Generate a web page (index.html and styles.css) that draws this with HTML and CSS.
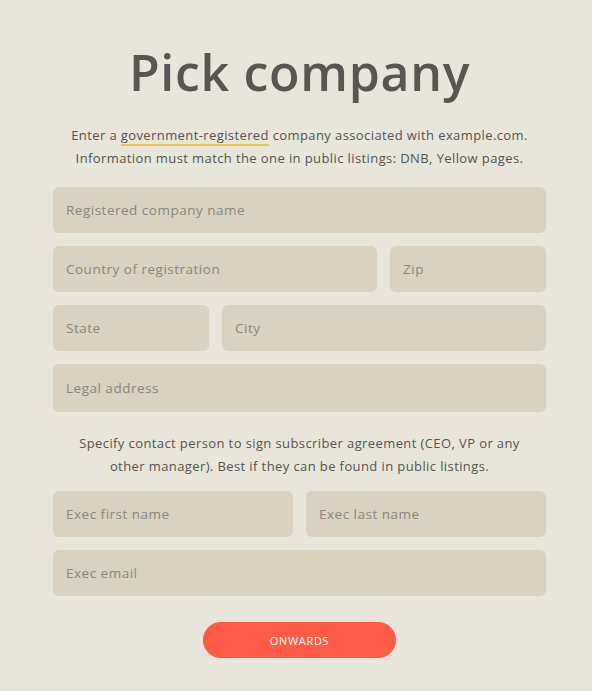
FILE: index.html
```html
<!DOCTYPE html>
<html lang="en">
<head>
    <meta charset="UTF-8">
    <meta name="viewport" content="width=device-width, initial-scale=1.0">
    <title>Pick company</title>
    <link rel="stylesheet" href="styles.css">
</head>
<body>
    <div class="container">
        <h1>Pick company</h1>
        <p class="intro">
            Enter a <span class="marked">government-registered</span> company associated with example.com.<br>
            Information must match the one in public listings: DNB, Yellow pages.
        </p>

        <form class="company-form">
            <div class="row">
                <input type="text" placeholder="Registered company name">
            </div>
            <div class="row row-wide-left">
                <input type="text" placeholder="Country of registration">
                <input type="text" placeholder="Zip">
            </div>
            <div class="row row-wide-right">
                <input type="text" placeholder="State">
                <input type="text" placeholder="City">
            </div>
            <div class="row">
                <input type="text" class="tall" placeholder="Legal address">
            </div>

            <p class="intro contact">
                Specify contact person to sign subscriber agreement (CEO, VP or any<br>
                other manager). Best if they can be found in public listings.
            </p>

            <div class="row row-half">
                <input type="text" placeholder="Exec first name">
                <input type="text" placeholder="Exec last name">
            </div>
            <div class="row">
                <input type="email" placeholder="Exec email">
            </div>

            <div class="actions">
                <button type="button">Onwards</button>
            </div>
        </form>
    </div>
</body>
</html>
```

FILE: styles.css
```css
body {
    font-family: "Open Sans", Arial, sans-serif;
    background-color: #e8e6da;
    color: #555550;
    margin: 0;
    padding: 0;
}

.container {
    width: 493px;
    margin: 0 46px 0 53px;
    padding-top: 40px;
}

h1 {
    margin: 0;
    font-size: 50px;
    font-weight: 600;
    line-height: 64px;
    letter-spacing: 0.7px;
    text-align: center;
    color: #575652;
}

.intro {
    margin: 20px 0 17px;
    font-size: 13px;
    line-height: 23px;
    letter-spacing: 0.4px;
    text-align: center;
    color: #55544f;
}

.marked {
    border-bottom: 2px solid #f2c441;
}

.company-form {
    display: flex;
    flex-direction: column;
    gap: 13px;
}

.row {
    display: grid;
    grid-template-columns: 1fr;
    gap: 13px;
}

.row-wide-left {
    grid-template-columns: 324px 1fr;
}

.row-wide-right {
    grid-template-columns: 156px 1fr;
}

.row-half {
    grid-template-columns: 1fr 1fr;
}

input {
    box-sizing: border-box;
    width: 100%;
    height: 46px;
    padding: 0 13px;
    border: none;
    border-radius: 6px;
    background-color: #d8d2bf;
    font-family: inherit;
    font-size: 13.5px;
    letter-spacing: 0.5px;
    color: #55534c;
    outline: none;
}

input.tall {
    height: 48px;
}

input::placeholder {
    color: #8b877a;
}

.intro.contact {
    margin: 7px 0 0;
}

.actions {
    display: flex;
    justify-content: center;
    padding: 13px 0 30px;
}

button {
    width: 193px;
    height: 36px;
    border: none;
    border-radius: 18px;
    background-color: #fd5b45;
    color: white;
    font-family: inherit;
    font-size: 11px;
    text-transform: uppercase;
    letter-spacing: 0.7px;
    cursor: pointer;
}
```
